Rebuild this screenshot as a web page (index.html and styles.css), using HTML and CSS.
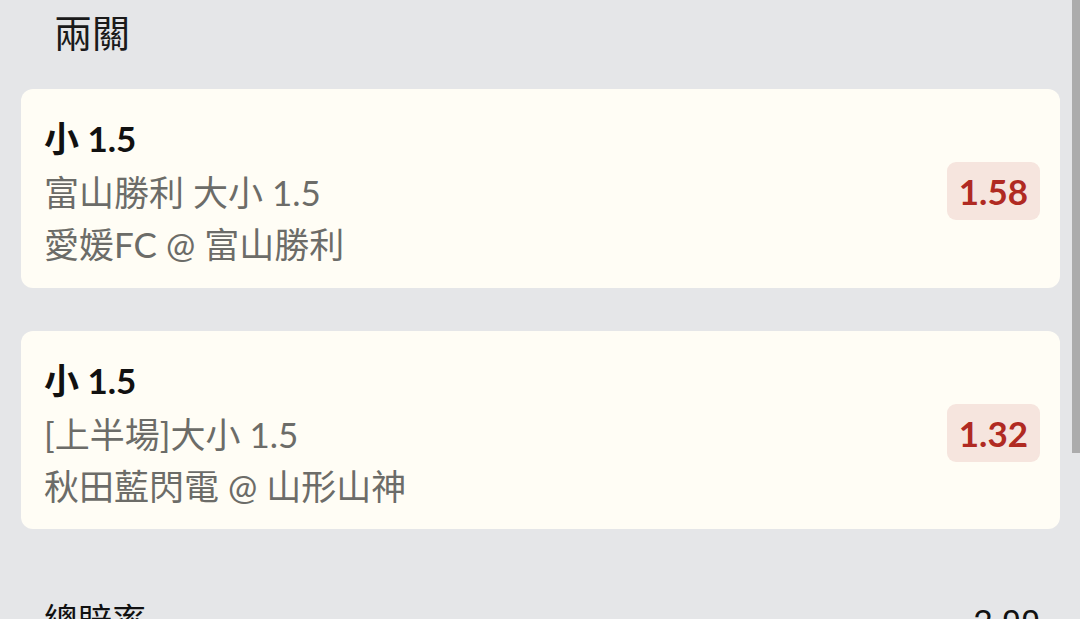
FILE: index.html
```html
<!DOCTYPE html>
<html lang="zh-Hant">
<head>
<meta charset="utf-8">
<link rel="stylesheet" href="styles.css">
</head>
<body>
<div class="page">
  <h1 class="section-title">兩關</h1>
  <div class="card">
    <div class="info">
      <div class="pick">小 1.5</div>
      <div class="line">富山勝利 大小 1.5</div>
      <div class="line">愛媛FC @ 富山勝利</div>
    </div>
    <div class="odds">1.58</div>
  </div>
  <div class="card">
    <div class="info">
      <div class="pick">小 1.5</div>
      <div class="line">[上半場]大小 1.5</div>
      <div class="line">秋田藍閃電 @ 山形山神</div>
    </div>
    <div class="odds">1.32</div>
  </div>
  <div class="total">
    <span class="total-label">總賠率</span>
    <span class="total-value">2.00</span>
  </div>
</div>
<div class="scroll-thumb"></div>
</body>
</html>
```

FILE: styles.css
```css
html, body {
  margin: 0;
  padding: 0;
  background: #e5e6e8;
  height: 619px;
  overflow: hidden;
}
body {
  font-family: "Lato", "Noto Sans CJK TC", sans-serif;
  color: #141414;
  position: relative;
}
.page {
  padding: 0 20px 0 21px;
}
.section-title {
  margin: 0;
  padding: 6px 0 0 33px;
  height: 89px;
  box-sizing: border-box;
  font-family: "Noto Sans CJK TC", sans-serif;
  font-weight: 400;
  font-size: 38px;
  line-height: 50px;
  color: #1a1a1a;
}
.card {
  background: #fffdf5;
  border-radius: 12px;
  padding: 21px 20px 18px 23px;
  display: flex;
  align-items: center;
  justify-content: space-between;
  margin-bottom: 43px;
  height: 199px;
  box-sizing: border-box;
}
.card + .card {
  height: 198px;
  margin-bottom: 0;
}
.pick {
  font-weight: 700;
  font-size: 35px;
  line-height: 56px;
  color: #111;
}
.line {
  font-size: 35px;
  font-weight: 400;
  line-height: 52px;
  color: #6c6c68;
}
.odds {
  background: #f6e5de;
  color: #b02a22;
  font-weight: 700;
  font-size: 35px;
  line-height: 58px;
  padding: 0 12px;
  border-radius: 9px;
  margin-top: 2px;
}
.total {
  display: flex;
  justify-content: space-between;
  margin-top: 65px;
  padding: 0 20px 0 23px;
  font-size: 34px;
  line-height: 50px;
  color: #111;
}
.total-label {
  font-family: "Noto Sans CJK TC", sans-serif;
}
.total-value {
  font-family: "Roboto", sans-serif;
  margin-top: 3px;
}
.scroll-thumb {
  position: absolute;
  top: 0;
  right: 0;
  width: 8px;
  height: 453px;
  background: #acacac;
}
```
